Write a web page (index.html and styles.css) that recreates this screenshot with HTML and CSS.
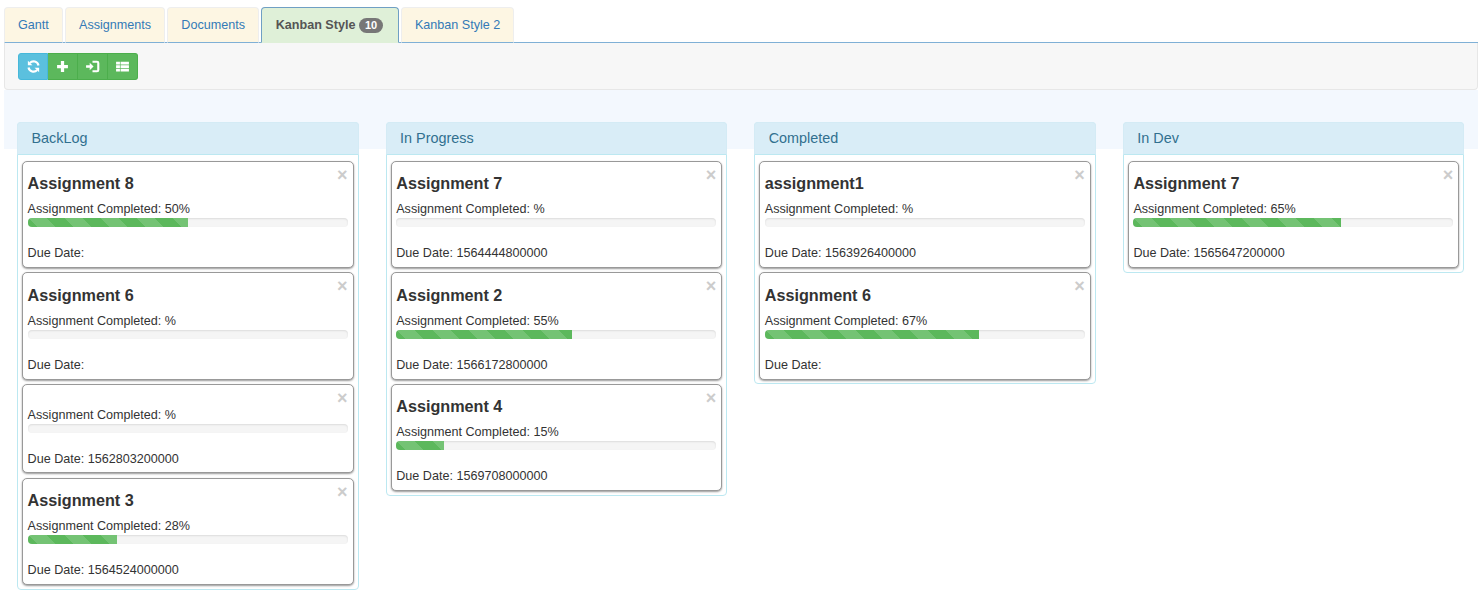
FILE: index.html
```html
<!DOCTYPE html>
<html lang="en">
<head>
  <meta charset="UTF-8">
  <title>Kanban Style</title>
  <link rel="stylesheet" href="styles.css">
</head>
<body>

<ul class="tabs">
  <li class="tab"><a href="#">Gantt</a></li>
  <li class="tab"><a href="#">Assignments</a></li>
  <li class="tab"><a href="#">Documents</a></li>
  <li class="tab active"><a href="#">Kanban Style <span class="badge">10</span></a></li>
  <li class="tab"><a href="#">Kanban Style 2</a></li>
</ul>

<div class="toolbar">
  <div class="btn-group">
    <button class="btn btn-info" aria-label="Refresh">
      <svg viewBox="0 0 12 12" width="13" height="13"><path d="M10.6 5A4.7 4.7 0 0 0 2.6 2.7" class="ico-line"/><path d="M.8.6v4.2H5z" class="ico-fill"/><path d="M1.4 7a4.7 4.7 0 0 0 8 2.3" class="ico-line"/><path d="M11.2 11.4V7.2H7z" class="ico-fill"/></svg>
    </button>
    <button class="btn btn-success" aria-label="Add">
      <svg viewBox="0 0 12 12" width="13" height="13"><path d="M4.5 1h3v3.5H11v3H7.5V11h-3V7.5H1v-3h3.5z" class="ico-fill"/></svg>
    </button>
    <button class="btn btn-success" aria-label="Import">
      <svg viewBox="0 0 14 12" width="15" height="13"><path d="M1 4.8h3.4V2.6L8 6 4.4 9.4V7.2H1z" class="ico-fill"/><path d="M7 1.6h4.2c.7 0 1.2.5 1.2 1.2v6.4c0 .7-.5 1.2-1.2 1.2H7" class="ico-line"/></svg>
    </button>
    <button class="btn btn-success" aria-label="List">
      <svg viewBox="0 0 14 12" width="15" height="13"><path d="M1 1.5h3.6v2.6H1zM5.2 1.5H13v2.6H5.2zM1 4.8h3.6v2.6H1zM5.2 4.8H13v2.6H5.2zM1 8.1h3.6v2.6H1zM5.2 8.1H13v2.6H5.2z" class="ico-fill"/></svg>
    </button>
  </div>
</div>

<div class="board">

  <section class="column">
    <h3 class="column-title">BackLog</h3>
    <div class="column-body">
      <article class="card">
        <span class="close">&times;</span>
        <h4 class="card-title">Assignment 8</h4>
        <div class="card-label">Assignment Completed: 50%</div>
        <div class="progress"><div class="progress-bar" style="width: 50%"></div></div>
        <div class="card-due">Due Date:</div>
      </article>
      <article class="card">
        <span class="close">&times;</span>
        <h4 class="card-title">Assignment 6</h4>
        <div class="card-label">Assignment Completed: %</div>
        <div class="progress"></div>
        <div class="card-due">Due Date:</div>
      </article>
      <article class="card no-title">
        <span class="close">&times;</span>
        <div class="card-label">Assignment Completed: %</div>
        <div class="progress"></div>
        <div class="card-due">Due Date: 1562803200000</div>
      </article>
      <article class="card">
        <span class="close">&times;</span>
        <h4 class="card-title">Assignment 3</h4>
        <div class="card-label">Assignment Completed: 28%</div>
        <div class="progress"><div class="progress-bar" style="width: 28%"></div></div>
        <div class="card-due">Due Date: 1564524000000</div>
      </article>
    </div>
  </section>

  <section class="column">
    <h3 class="column-title">In Progress</h3>
    <div class="column-body">
      <article class="card">
        <span class="close">&times;</span>
        <h4 class="card-title">Assignment 7</h4>
        <div class="card-label">Assignment Completed: %</div>
        <div class="progress"></div>
        <div class="card-due">Due Date: 1564444800000</div>
      </article>
      <article class="card">
        <span class="close">&times;</span>
        <h4 class="card-title">Assignment 2</h4>
        <div class="card-label">Assignment Completed: 55%</div>
        <div class="progress"><div class="progress-bar" style="width: 55%"></div></div>
        <div class="card-due">Due Date: 1566172800000</div>
      </article>
      <article class="card">
        <span class="close">&times;</span>
        <h4 class="card-title">Assignment 4</h4>
        <div class="card-label">Assignment Completed: 15%</div>
        <div class="progress"><div class="progress-bar" style="width: 15%"></div></div>
        <div class="card-due">Due Date: 1569708000000</div>
      </article>
    </div>
  </section>

  <section class="column">
    <h3 class="column-title">Completed</h3>
    <div class="column-body">
      <article class="card">
        <span class="close">&times;</span>
        <h4 class="card-title">assignment1</h4>
        <div class="card-label">Assignment Completed: %</div>
        <div class="progress"></div>
        <div class="card-due">Due Date: 1563926400000</div>
      </article>
      <article class="card">
        <span class="close">&times;</span>
        <h4 class="card-title">Assignment 6</h4>
        <div class="card-label">Assignment Completed: 67%</div>
        <div class="progress"><div class="progress-bar" style="width: 67%"></div></div>
        <div class="card-due">Due Date:</div>
      </article>
    </div>
  </section>

  <section class="column">
    <h3 class="column-title">In Dev</h3>
    <div class="column-body">
      <article class="card">
        <span class="close">&times;</span>
        <h4 class="card-title">Assignment 7</h4>
        <div class="card-label">Assignment Completed: 65%</div>
        <div class="progress"><div class="progress-bar" style="width: 65%"></div></div>
        <div class="card-due">Due Date: 1565647200000</div>
      </article>
    </div>
  </section>

</div>

</body>
</html>
```

FILE: styles.css
```css
* {
  box-sizing: border-box;
}

body {
  margin: 0;
  padding: 7px 2px 0 4px;
  font-family: "Liberation Sans", Arial, sans-serif;
  font-size: 12.6px;
  color: #333;
  background: #fff;
}

/* Tabs */
.tabs {
  display: flex;
  gap: 2.2px;
  margin: 0;
  padding: 0;
  list-style: none;
  border-bottom: 1px solid #7fb0d6;
}

.tab {
  margin-bottom: -1px;
}

.tab a {
  display: block;
  height: 36px;
  padding: 0 13px;
  line-height: 35px;
  font-size: 12.6px;
  color: #337ab7;
  text-decoration: none;
  background: #fdf6e3;
  border: 1px solid #eee;
  border-bottom: 1px solid #7fb0d6;
  border-radius: 4px 4px 0 0;
}

.tab.active a {
  padding: 0 14.5px 0 13.5px;
  font-weight: bold;
  color: #555;
  background: #dff0d8;
  border-color: #6f9fc4;
  border-bottom-color: #dff0d8;
}

.badge {
  display: inline-block;
  min-width: 24px;
  padding: 2px 6px;
  font-size: 11px;
  line-height: 11px;
  text-align: center;
  color: #fff;
  background: #777;
  border-radius: 8px;
}

/* Toolbar */
.toolbar {
  height: 47px;
  padding: 10px 13px;
  background: #f7f7f7;
  border: 1px solid #e7e7e7;
  border-top: none;
  border-radius: 0 0 4px 4px;
}

.btn-group {
  display: flex;
}

.btn {
  display: flex;
  align-items: center;
  justify-content: center;
  width: 30px;
  height: 27px;
  padding: 0;
  border: 1px solid #4cae4c;
  border-left-width: 0;
}

.btn:first-child {
  border-left-width: 1px;
  border-radius: 3px 0 0 3px;
}

.btn:last-child {
  border-radius: 0 3px 3px 0;
}

.btn-info {
  background: #5bc0de;
  border-color: #46b8da;
}

.btn-success {
  background: #5cb85c;
}

.ico-fill {
  fill: #fff;
}

.ico-line {
  fill: none;
  stroke: #fff;
  stroke-width: 2;
}

/* Board */
.board {
  display: flex;
  align-items: flex-start;
  gap: 27px;
  padding: 32px 0 0 13px;
  background: linear-gradient(#f3f8fe, #f3f8fe) no-repeat top / 100% 59px;
}

.column {
  width: 341.6px;
  background: #fff;
  border: 1px solid #bce8f1;
  border-radius: 4px;
}

.column-title {
  height: 33px;
  margin: -1px -1px 0;
  padding: 0 13.5px;
  line-height: 31px;
  font-size: 14.4px;
  font-weight: normal;
  color: #31708f;
  background: #d9edf7;
  border: 1px solid #d4ebf5;
  border-bottom-color: #bce8f1;
  border-radius: 4px 4px 0 0;
}

.column-body {
  padding: 6px 4px 3.5px 4px;
}

/* Cards */
.card {
  position: relative;
  height: 107.4px;
  margin-bottom: 4px;
  padding: 0 5px 0 4.6px;
  background: #fff;
  border: 1px solid #999;
  border-radius: 5px;
  box-shadow: 0 1px 2px rgba(0, 0, 0, 0.4);
}

.card:last-child {
  margin-bottom: 0;
}

.card.no-title {
  height: 89.7px;
  padding-top: 22px;
  margin-bottom: 4.5px;
}

.close {
  position: absolute;
  top: 4px;
  right: 5px;
  font-size: 18px;
  line-height: 18px;
  font-weight: bold;
  color: #ccc;
}

.card-title {
  margin: 0;
  padding-top: 12.3px;
  height: 39.3px;
  line-height: 19px;
  font-size: 16.2px;
  font-weight: bold;
}

.card-label {
  height: 17px;
  line-height: 16px;
}

.progress {
  height: 9px;
  overflow: hidden;
  background: #f5f5f5;
  border-radius: 4px;
  box-shadow: inset 0 1px 2px rgba(0, 0, 0, 0.1);
}

.progress-bar {
  height: 100%;
  background-color: #5cb85c;
  background-image: linear-gradient(45deg, rgba(255, 255, 255, 0.15) 25%, transparent 25%, transparent 50%, rgba(255, 255, 255, 0.15) 50%, rgba(255, 255, 255, 0.15) 75%, transparent 75%, transparent);
  background-size: 36px 36px;
}

.card-due {
  margin-top: 18px;
  line-height: 16px;
}
```
